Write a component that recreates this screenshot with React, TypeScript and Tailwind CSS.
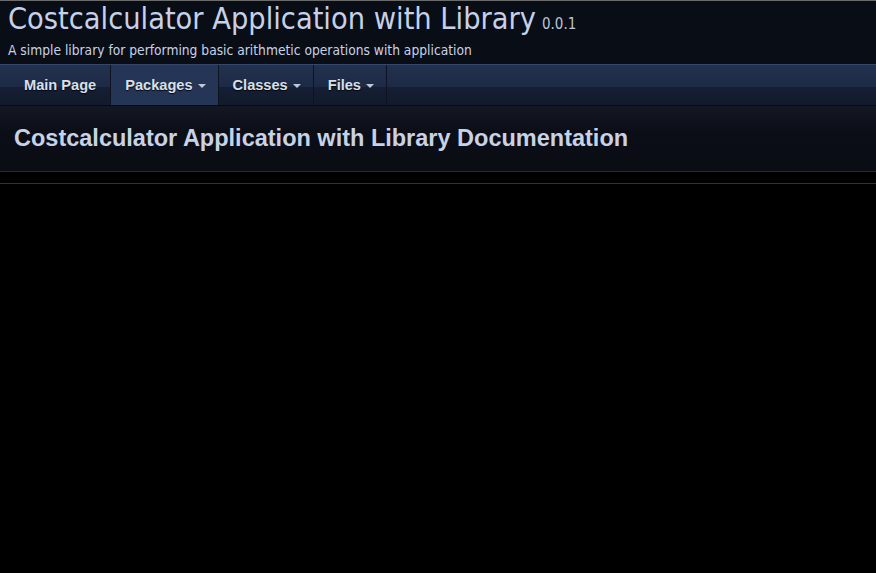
import React from "react";

const tabs = [
  { label: "Main Page", menu: false, active: false },
  { label: "Packages", menu: true, active: true },
  { label: "Classes", menu: true, active: false },
  { label: "Files", menu: true, active: false },
];

export default function App() {
  return (
    <div className="min-h-[573px] bg-black text-[#c8d2e6]">
      {/* Project header */}
      <div className="border-t border-[#6b6b6b] bg-[#090d16] px-[8px] h-[64px]">
        <div className="flex items-baseline gap-[6px] leading-[36px]">
          <span className="text-[30.4px] text-[#c6d1e8]" style={{ fontFamily: "'DejaVu Sans Condensed', Tahoma, sans-serif" }}>
            Costcalculator Application with Library
          </span>
          <span className="text-[15px] text-[#b9c4da]" style={{ fontFamily: "'DejaVu Sans Condensed', Tahoma, sans-serif" }}>
            0.0.1
          </span>
        </div>
        <div className="text-[13.7px] leading-[20px] mt-[-2px] text-[#c8d2e6]" style={{ fontFamily: "'DejaVu Sans Condensed', Tahoma, sans-serif" }}>
          A simple library for performing basic arithmetic operations with application
        </div>
      </div>

      {/* Nav tabs */}
      <div className="flex h-[41px] border-t border-[#34466a] bg-[linear-gradient(#22314f_0%,#1d2a45_55%,#151e33_56%,#121a2c_100%)] pl-[10px] font-['Liberation_Sans',Arial,sans-serif]">
        {tabs.map((t) => (
          <div
            key={t.label}
            className={`flex items-center gap-[5px] border-r border-[#0d1320] pt-[2px] pl-[14px] text-[14.6px] font-bold text-[#d8e0ee] [text-shadow:0_1px_1px_rgba(0,0,0,0.9)] ${
              t.menu ? "pr-[12px]" : "pr-[14px]"
            } ${t.active ? "bg-[#243556]" : ""}`}
          >
            {t.label}
            {t.menu && (
              <span className="inline-block h-0 w-0 border-x-[4px] border-t-[4px] border-x-transparent border-t-[#c0c8d8]" />
            )}
          </div>
        ))}
      </div>

      {/* Page title */}
      <div className="h-[67px] border-t border-[#070a10] border-b border-b-[#262b38] bg-[linear-gradient(#141824_0%,#0b0e16_40%,#0a0d14_100%)] px-[14px] flex items-center">
        <h1 className="text-[23.5px] font-bold text-[#c8d2e6] font-['Liberation_Sans',Arial,sans-serif]">
          Costcalculator Application with Library Documentation
        </h1>
      </div>
      <div className="h-[11px]" />
      <div className="h-px bg-[#2e3240]" />
    </div>
  );
}
